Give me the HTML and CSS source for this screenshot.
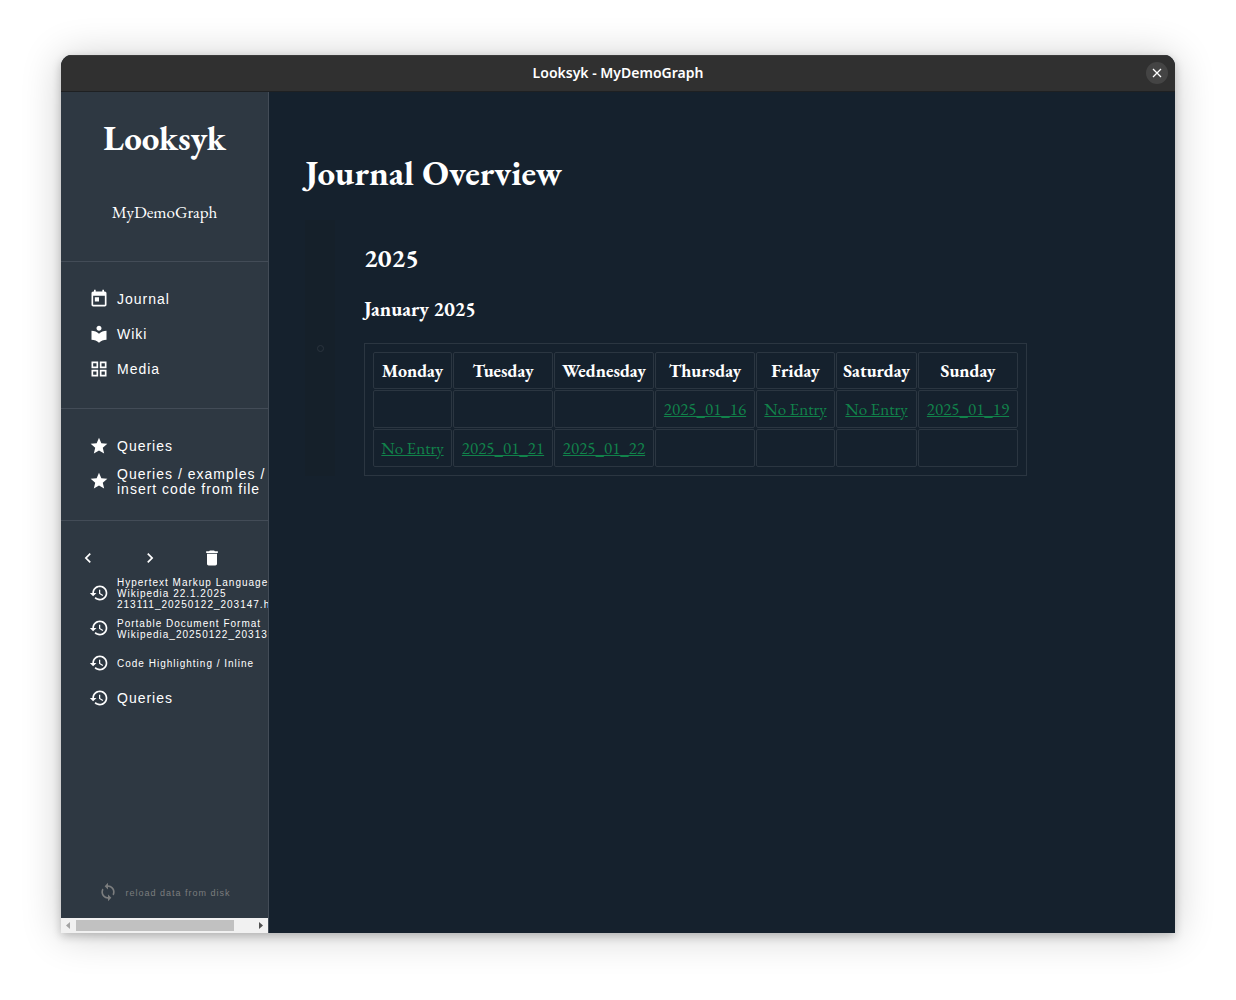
FILE: index.html
```html
<!DOCTYPE html>
<html lang="en">
<head>
<meta charset="utf-8">
<title>Looksyk - MyDemoGraph</title>
<link rel="stylesheet" href="styles.css">
</head>
<body>
<svg class="sprite" aria-hidden="true">
  <symbol id="today" viewBox="0 0 24 24"><path d="M19 3h-1V1h-2v2H8V1H6v2H5c-1.11 0-2 .9-2 2v14c0 1.1.89 2 2 2h14c1.1 0 2-.9 2-2V5c0-1.1-.9-2-2-2zm0 16H5V8h14v11zM7 10h5v5H7z"/></symbol>
  <symbol id="library" viewBox="0 0 24 24"><path d="M12 11.55C9.64 9.35 6.48 8 3 8v11c3.48 0 6.64 1.35 9 3.55 2.36-2.19 5.52-3.55 9-3.55V8c-3.48 0-6.64 1.35-9 3.55zM12 8c1.66 0 3-1.34 3-3s-1.34-3-3-3-3 1.34-3 3 1.34 3 3 3z"/></symbol>
  <symbol id="grid" viewBox="0 0 24 24"><path fill-rule="evenodd" d="M3 3v8h8V3H3zm6 6H5V5h4v4zm-6 4v8h8v-8H3zm6 6H5v-4h4v4zm4-16v8h8V3h-8zm6 6h-4V5h4v4zm-6 4v8h8v-8h-8zm6 6h-4v-4h4v4z"/></symbol>
  <symbol id="star" viewBox="0 0 24 24"><path d="M12 17.27L18.18 21l-1.64-7.03L22 9.24l-7.19-.61L12 2 9.19 8.63 2 9.24l5.46 4.73L5.82 21z"/></symbol>
  <symbol id="left" viewBox="0 0 24 24"><path d="M15.41 7.41L14 6l-6 6 6 6 1.41-1.41L10.83 12z"/></symbol>
  <symbol id="right" viewBox="0 0 24 24"><path d="M10 6L8.59 7.41 13.17 12l-4.58 4.59L10 18l6-6z"/></symbol>
  <symbol id="trash" viewBox="0 0 24 24"><path d="M6 19c0 1.1.9 2 2 2h8c1.1 0 2-.9 2-2V7H6v12zM19 4h-3.500l-1-1h-5l-1 1H5v2h14V4z"/></symbol>
  <symbol id="history" viewBox="0 0 24 24"><path d="M13 3c-4.970 0-9 4.030-9 9H1l3.890 3.890.070.140L9 12H6c0-3.870 3.130-7 7-7s7 3.130 7 7-3.130 7-7 7c-1.930 0-3.680-.79-4.940-2.060l-1.420 1.420C8.270 19.990 10.510 21 13 21c4.970 0 9-4.030 9-9s-4.030-9-9-9zm-1 5v5l4.280 2.540.72-1.210-3.500-2.080V8H12z"/></symbol>
  <symbol id="sync" viewBox="0 0 24 24"><path d="M12 4V1L8 5l4 4V6c3.310 0 6 2.690 6 6 0 1.010-.25 1.970-.7 2.800l1.460 1.460C19.540 15.030 20 13.570 20 12c0-4.420-3.580-8-8-8zm0 14c-3.310 0-6-2.690-6-6 0-1.010.25-1.970.7-2.800L5.240 7.740C4.460 8.970 4 10.430 4 12c0 4.420 3.580 8 8 8v3l4-4-4-4v3z"/></symbol>
</svg>

<div class="window">
  <header class="titlebar">
    <span class="window-title">Looksyk - MyDemoGraph</span>
    <button class="close" type="button" aria-label="Close"><svg viewBox="0 0 22 22"><path d="M7 7l8 8M15 7l-8 8"/></svg></button>
  </header>
  <div class="body">
    <aside class="sidebar">
      <div class="brand">
        <h1 class="brand-name">Looksyk</h1>
        <p class="graph-name">MyDemoGraph</p>
      </div>
      <nav class="group" aria-label="Main">
        <a class="item" href="#journal"><svg class="icon"><use href="#today"/></svg><span>Journal</span></a>
        <a class="item" href="#wiki"><svg class="icon"><use href="#library"/></svg><span>Wiki</span></a>
        <a class="item" href="#media"><svg class="icon"><use href="#grid"/></svg><span>Media</span></a>
      </nav>
      <nav class="group" aria-label="Favourites">
        <a class="item" href="#queries"><svg class="icon"><use href="#star"/></svg><span>Queries</span></a>
        <a class="item" href="#examples"><svg class="icon"><use href="#star"/></svg><span>Queries / examples /<br>insert code from file</span></a>
      </nav>
      <nav class="group recent" aria-label="History">
        <div class="controls">
          <button type="button" aria-label="Back"><svg class="icon"><use href="#left"/></svg></button>
          <button type="button" aria-label="Forward"><svg class="icon"><use href="#right"/></svg></button>
          <button type="button" aria-label="Clear history"><svg class="icon"><use href="#trash"/></svg></button>
        </div>
        <a class="item small" href="#html"><svg class="icon"><use href="#history"/></svg><span>Hypertext Markup Language<br>Wikipedia 22.1.2025<br>213111_20250122_203147.h</span></a>
        <a class="item small" href="#pdf"><svg class="icon"><use href="#history"/></svg><span>Portable Document Format<br>Wikipedia_20250122_20313</span></a>
        <a class="item small" href="#code"><svg class="icon"><use href="#history"/></svg><span>Code Highlighting / Inline</span></a>
        <a class="item" href="#queries"><svg class="icon"><use href="#history"/></svg><span>Queries</span></a>
      </nav>
      <button class="reload" type="button"><svg class="icon"><use href="#sync"/></svg><span>reload data from disk</span></button>
      <div class="scrollbar" aria-hidden="true">
        <svg class="arrow" viewBox="0 0 15 15"><path fill="#a3a3a3" d="M9 4v7L5 7.500z"/></svg>
        <div class="track"><div class="thumb"></div></div>
        <svg class="arrow" viewBox="0 0 15 15"><path fill="#505050" d="M6 4v7l4-3.500z"/></svg>
      </div>
    </aside>
    <main class="content">
      <h1 class="page-title">Journal Overview</h1>
      <section class="block">
        <div class="handle"><span class="bullet"></span></div>
        <div class="entry">
          <h2>2025</h2>
          <h3>January 2025</h3>
          <table class="calendar">
            <colgroup><col class="narrow"><col class="wide"><col class="wide"><col class="wide"><col class="narrow"><col class="medium"><col class="wide"></colgroup>
            <thead>
              <tr><th>Monday</th><th>Tuesday</th><th>Wednesday</th><th>Thursday</th><th>Friday</th><th>Saturday</th><th>Sunday</th></tr>
            </thead>
            <tbody>
              <tr><td></td><td></td><td></td><td><a href="#d16">2025_01_16</a></td><td><a href="#d17">No Entry</a></td><td><a href="#d18">No Entry</a></td><td><a href="#d19">2025_01_19</a></td></tr>
              <tr><td><a href="#d20">No Entry</a></td><td><a href="#d21">2025_01_21</a></td><td><a href="#d22">2025_01_22</a></td><td></td><td></td><td></td><td></td></tr>
            </tbody>
          </table>
        </div>
      </section>
    </main>
  </div>
</div>
</body>
</html>
```
FILE: styles.css
```css
* { box-sizing: border-box; }

body {
  margin: 0;
  min-height: 100vh;
  padding: 55px 61px 67px;
  display: flex;
  background: #fff;
  color: #fff;
  font-family: "EB Garamond", "Liberation Serif", serif;
  font-size: 17px;
}

h1, h2, h3, p { margin: 0; }

button {
  padding: 0;
  border: 0;
  background: none;
  color: inherit;
  font: inherit;
  letter-spacing: inherit;
}

.sprite { display: none; }

.icon {
  width: 20px;
  height: 20px;
  margin-bottom: 2px;
  flex: none;
  display: block;
  fill: currentColor;
}

.window {
  flex: 1;
  min-width: 0;
  display: flex;
  flex-direction: column;
  overflow: hidden;
  border-radius: 11px 11px 0 0;
  background: #15212d;
  box-shadow: 0 3px 10px rgba(0, 0, 0, 0.22), 0 2px 40px rgba(0, 0, 0, 0.2);
}

.titlebar {
  height: 37px;
  padding: 0 7px 2px;
  display: grid;
  grid-template-columns: 22px 1fr 22px;
  align-items: center;
  background: #303030;
  border-top: 1px solid #3a3a3a;
  border-bottom: 1px solid #1e2022;
}

.window-title {
  grid-column: 2;
  text-align: center;
  font-family: "Noto Sans", sans-serif;
  font-size: 14px;
  font-weight: 600;
}

.close {
  width: 22px;
  height: 22px;
  border-radius: 50%;
  background: #444;
}

.close svg {
  display: block;
  fill: none;
  stroke: #fff;
  stroke-width: 1.3;
}

.body {
  flex: 1;
  display: flex;
}

.sidebar {
  width: 208px;
  flex: none;
  display: flex;
  flex-direction: column;
  overflow: hidden;
  background: #2e3842;
  border-right: 1px solid #434c57;
  font-family: "Liberation Sans", sans-serif;
  font-size: 14px;
  line-height: 15px;
  letter-spacing: 1px;
}

.brand {
  height: 170px;
  padding-top: 26px;
  border-bottom: 1px solid #434c57;
  text-align: center;
  font-family: "EB Garamond", "Liberation Serif", serif;
  letter-spacing: normal;
}

.brand-name {
  font-size: 35px;
  line-height: 40px;
}

.graph-name {
  margin-top: 44px;
  font-size: 17px;
  line-height: 20px;
}

.group {
  padding: 20px 0 21px;
  border-bottom: 1px solid #434c57;
}

.recent { border-bottom: 0; }

.item {
  height: 35px;
  padding-left: 28px;
  display: flex;
  align-items: center;
  gap: 8px;
  color: #fff;
  text-decoration: none;
  white-space: nowrap;
}

.small {
  font-size: 10px;
  line-height: 11px;
}

.controls {
  height: 35px;
  padding-left: 17px;
  display: flex;
  align-items: center;
  gap: 42px;
}

.reload {
  margin-top: auto;
  margin-bottom: 14px;
  display: flex;
  align-items: center;
  justify-content: center;
  gap: 7px;
  color: #7b7d7e;
  font-size: 9px;
}

.scrollbar {
  height: 15px;
  display: flex;
  background: #f1f1f1;
}

.arrow {
  width: 15px;
  height: 15px;
}

.track {
  flex: 1;
  padding: 2px 0;
}

.thumb {
  width: 89%;
  height: 11px;
  background: #c1c1c1;
}

.content {
  flex: 1;
  min-width: 0;
  padding: 61px 36px;
}

.page-title {
  font-size: 35px;
  line-height: 40px;
}

.block {
  margin-top: 27px;
  display: flex;
  gap: 29px;
}

.handle {
  width: 30px;
  flex: none;
  display: flex;
  align-items: center;
  justify-content: center;
  background: #15202a;
}

.bullet {
  width: 7px;
  height: 7px;
  border: 1px solid #2a343e;
  border-radius: 50%;
}

.entry { padding-top: 22px; }

h2 {
  font-size: 26px;
  line-height: 32px;
}

h3 {
  margin-top: 23px;
  font-size: 20px;
  line-height: 24px;
}

.calendar {
  width: 662px;
  margin-top: 22px;
  padding: 7px;
  table-layout: fixed;
  border: 1px solid #2b3641;
  border-spacing: 1px;
  line-height: 20px;
}

.narrow { width: 79px; }
.medium { width: 81px; }
.wide { width: 100px; }

th, td {
  padding: 0;
  border: 1px solid #2b3641;
  border-radius: 2px;
  text-align: center;
}

th {
  height: 37px;
  font-size: 18px;
}

td { height: 38px; }

td a { color: #11834b; }
```
